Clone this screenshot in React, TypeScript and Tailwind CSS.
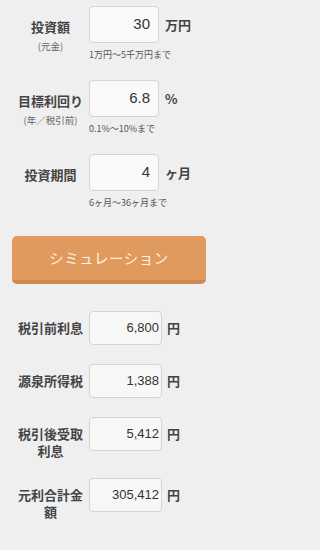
import React from 'react';

const jp = { fontFamily: '"Noto Sans CJK JP", "Noto Sans", sans-serif' };
const num = { fontFamily: '"Liberation Sans", Arial, sans-serif' };

const inputs = [
  { label: '投資額', sub: '(元金)', value: '30', unit: '万円', hint: '1万円～5千万円まで' },
  { label: '目標利回り', sub: '(年／税引前)', value: '6.8', unit: '%', hint: '0.1%～10%まで' },
  { label: '投資期間', sub: '', value: '4', unit: 'ヶ月', hint: '6ヶ月～36ヶ月まで' },
];

const results = [
  { label: '税引前利息', value: '6,800' },
  { label: '源泉所得税', value: '1,388' },
  { label: '税引後受取利息', value: '5,412' },
  { label: '元利合計金額', value: '305,412' },
];

export default function App() {
  return (
    <div className="min-h-screen bg-[#efefef]">
      <div className="w-[224px] h-[550px] text-[#444] overflow-hidden" style={jp}>
        <div className="pt-[6px] flex flex-col gap-[19px]">
          {inputs.map((row) => (
            <div key={row.label} className="flex items-start">
              <div className="ml-3 w-[77px] pt-[12px] flex flex-col items-center">
                <span className="text-[13px] leading-[18px] font-bold">{row.label}</span>
                {row.sub && (
                  <span className="text-[9.5px] leading-[12px] mt-[4px] text-[#666]">{row.sub}</span>
                )}
              </div>
              <div className="flex flex-col">
                <div className="flex items-center">
                  <div
                    className="w-[70px] h-[37px] rounded-[4px] border border-[#d4d4d4] bg-[#f9f9f9] flex items-center justify-end pr-[8px] text-[15px] text-[#333]"
                    style={num}
                  >
                    {row.value}
                  </div>
                  <span className="ml-[6px] text-[13px] font-bold">{row.unit}</span>
                </div>
                <span className="mt-[6px] text-[9px] leading-[12px] text-[#555] whitespace-nowrap">{row.hint}</span>
              </div>
            </div>
          ))}
        </div>

        <button className="mt-[27px] ml-3 w-[194px] h-[48px] rounded-[5px] bg-[#e09a5d] border-b-[4px] border-[#cd8a50] text-[#fdf2e0] text-[14.5px] tracking-[0.5px] flex items-center justify-center">
          シミュレーション
        </button>

        <div className="mt-[27px] flex flex-col gap-[19px]">
          {results.map((row) => (
            <div key={row.label} className="flex items-start">
              <div className="ml-[15px] w-[71px] pt-[8px] text-center text-[13px] leading-[17px] font-bold">
                {row.label}
              </div>
              <div
                className="ml-[3px] w-[73px] h-[34px] rounded-[4px] border border-[#d4d4d4] bg-[#f7f7f7] flex items-center justify-end pr-[2px] text-[13px] text-[#333]"
                style={num}
              >
                {row.value}
              </div>
              <span className="ml-[5px] mt-[8px] text-[13px] leading-[17px] font-bold">円</span>
            </div>
          ))}
        </div>
      </div>
    </div>
  );
}
